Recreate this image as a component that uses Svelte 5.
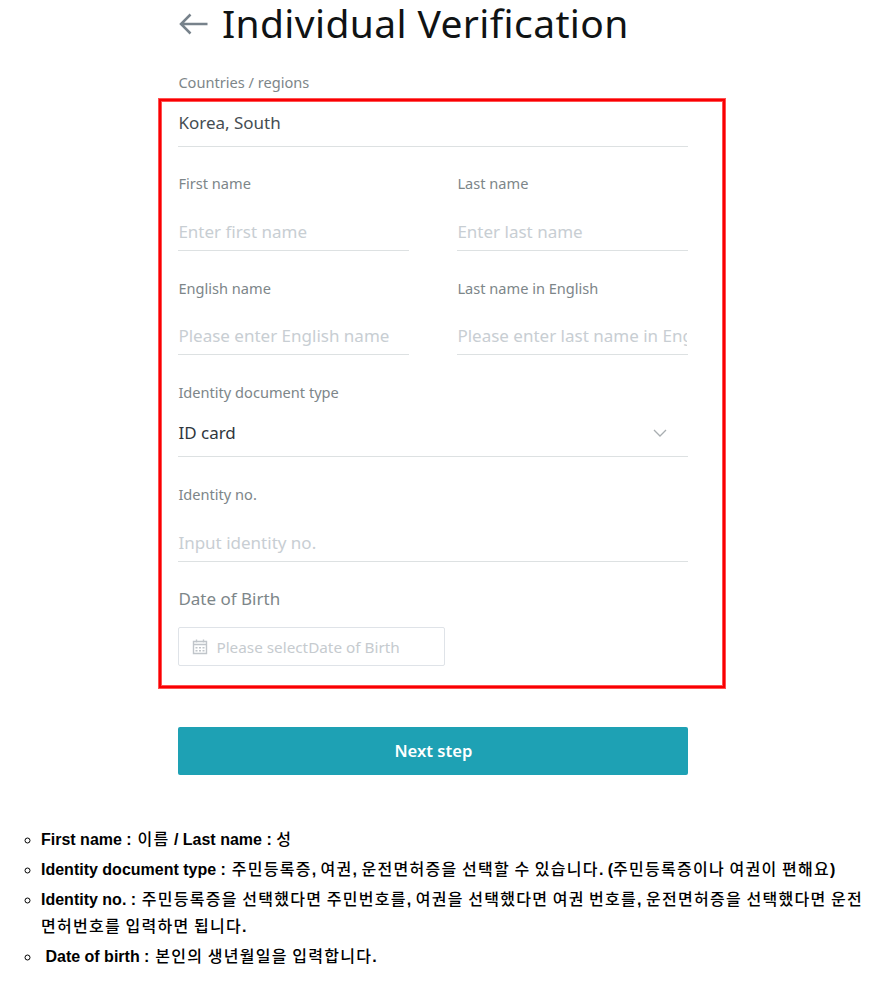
<script lang="ts">
	const nameRows = [
		[
			{ id: 'first-name', label: 'First name', placeholder: 'Enter first name' },
			{ id: 'last-name', label: 'Last name', placeholder: 'Enter last name' }
		],
		[
			{ id: 'english-name', label: 'English name', placeholder: 'Please enter English name' },
			{
				id: 'english-last-name',
				label: 'Last name in English',
				placeholder: 'Please enter last name in English'
			}
		]
	];

	const notes = [
		'First name : 이름 / Last name : 성',
		'Identity document type : 주민등록증, 여권, 운전면허증을 선택할 수 있습니다. (주민등록증이나 여권이 편해요)',
		'Identity no. : 주민등록증을 선택했다면 주민번호를, 여권을 선택했다면 여권 번호를, 운전면허증을 선택했다면 운전면허번호를 입력하면 됩니다.',
		'\u00a0Date of birth : 본인의 생년월일을 입력합니다.'
	];

	// Hangul runs land on the odd indexes
	const splitHangul = (text: string) => text.split(/([가-힣]+)/);
</script>

<main class="page">
	<section class="verification">
		<header class="header">
			<svg class="back" viewBox="0 0 30 22" aria-hidden="true">
				<path d="M12.5 1.500 3 11l9.500 9.500M3 11H29.500" />
			</svg>
			<h1>Individual Verification</h1>
		</header>
		<div class="label country-label">Countries / regions</div>

		<div class="frame">
			<div class="value country">Korea, South</div>

			{#each nameRows as row}
				<div class="row">
					{#each row as field (field.id)}
						<div class="field">
							<label class="label" for={field.id}>{field.label}</label>
							<input class="input" id={field.id} type="text" placeholder={field.placeholder} />
						</div>
					{/each}
				</div>
			{/each}

			<div class="field document">
				<div class="label">Identity document type</div>
				<div class="value select">
					<span>ID card</span>
					<svg class="chevron" viewBox="0 0 14 8" aria-hidden="true">
						<path d="M1 1l6 6 6-6" />
					</svg>
				</div>
			</div>

			<div class="field identity">
				<label class="label" for="identity-no">Identity no.</label>
				<input class="input" id="identity-no" type="text" placeholder="Input identity no." />
			</div>

			<div class="birth">
				<div class="birth-label">Date of Birth</div>
				<div class="date">
					<svg class="calendar" viewBox="0 0 16 16" aria-hidden="true">
						<path d="M1.500 2.500h13v12h-13zM1.500 5.500h13M4.500 .5v3M11.500 .5v3" />
						<path class="days" d="M3.500 8.700h9M3.500 11.700h9" />
					</svg>
					<span>Please selectDate of Birth</span>
				</div>
			</div>
		</div>

		<button class="next" type="button">Next step</button>
	</section>

	<ul class="notes">
		{#each notes as note}
			<li>{#each splitHangul(note) as part, i}<span class:ko={i % 2 === 1}>{part}</span>{/each}</li>
		{/each}
	</ul>
</main>

<style>
	:global(body) {
		background: #fff;
	}

	.page {
		height: 984px;
		font-family: 'Noto Sans', sans-serif;
	}

	.verification {
		width: 568px;
		margin-left: 158.4px;
	}

	.header {
		display: flex;
		align-items: center;
		height: 47px;
		padding-left: 20px;
	}

	.back {
		width: 30px;
		height: 22px;
		margin-right: 13.5px;
		fill: none;
		stroke: #77828b;
		stroke-width: 2.5;
	}

	h1 {
		margin: 0;
		padding-bottom: 1px;
		font-size: 39px;
		font-weight: 400;
		line-height: 46px;
		letter-spacing: 0.38px;
		white-space: nowrap;
		color: #101314;
	}

	.label {
		display: block;
		padding-bottom: 2px;
		font-size: 14.6px;
		line-height: 18px;
		color: #7d8689;
		white-space: nowrap;
	}

	.country-label {
		padding: 26px 0 7px 20px;
	}

	.frame {
		box-sizing: border-box;
		height: 591px;
		padding: 3px 37px 0 19px;
		border: 1px solid #ff5252;
		box-shadow:
			inset 0 0 0 2px #f90003,
			inset 0 0 0 3px #ff5252;
	}

	.value {
		box-sizing: border-box;
		font-size: 17px;
		border-bottom: 1px solid #dde1e2;
		color: #454d52;
	}

	.country {
		height: 45px;
		line-height: 42px;
	}

	.row {
		display: grid;
		grid-template-columns: 231px 231px;
		justify-content: space-between;
		height: 104px;
	}

	.field {
		padding-top: 27px;
	}

	.row + .row .field {
		padding-top: 28px;
	}

	.input {
		display: block;
		box-sizing: border-box;
		width: 100%;
		height: 57px;
		padding: 19px 1px 0 0;
		border: 0;
		border-bottom: 1px solid #dde1e2;
		border-radius: 0;
		background: none;
		font: 17px 'Noto Sans', sans-serif;
		outline: none;
	}

	.row + .row .input {
		height: 56px;
		padding-top: 18px;
	}

	.input::placeholder {
		color: #c8ced3;
		opacity: 1;
	}

	.document {
		padding-top: 28px;
	}

	.select {
		display: flex;
		align-items: center;
		justify-content: space-between;
		height: 54px;
		padding: 6px 21px 0 0;
		color: #30373d;
	}

	.chevron {
		width: 14px;
		height: 8px;
		fill: none;
		stroke: #a9aeb1;
		stroke-width: 1.3;
	}

	.identity {
		padding-top: 28px;
	}

	.identity .input {
		padding-top: 18px;
	}

	.birth {
		padding-top: 27px;
	}

	.birth-label {
		font-size: 17px;
		line-height: 20px;
		color: #7d8689;
	}

	.date {
		display: flex;
		align-items: center;
		box-sizing: border-box;
		width: 267px;
		height: 39px;
		margin-top: 18px;
		padding-left: 13px;
		border: 1px solid #dfe3e8;
		border-radius: 2px;
		font-size: 15.3px;
		color: #c6cbcf;
	}

	.calendar {
		width: 16px;
		height: 16px;
		margin-right: 8px;
		fill: none;
		stroke: #c0c5ca;
		stroke-width: 1.4;
	}

	.days {
		stroke-dasharray: 2 1.5;
	}

	.next {
		display: block;
		width: 510px;
		height: 48px;
		margin: 38px 0 0 20px;
		padding: 0 0 2px;
		border: 0;
		border-radius: 2px;
		background: #1ea1b4;
		color: #fff;
		font: 600 16.6px 'Noto Sans', sans-serif;
	}

	.notes {
		margin: 51px 0 0;
		padding: 0 24px 0 41px;
		list-style: circle;
		font-family: 'Liberation Sans', 'Noto Sans CJK KR', sans-serif;
		font-size: 16px;
		font-weight: 700;
		line-height: 27px;
		color: #000;
	}

	.notes li {
		margin-bottom: 3px;
	}

	.notes span:first-child {
		padding-right: 1.3px;
	}

	.notes .ko {
		font-weight: 500;
		letter-spacing: 1.28px;
	}
</style>
